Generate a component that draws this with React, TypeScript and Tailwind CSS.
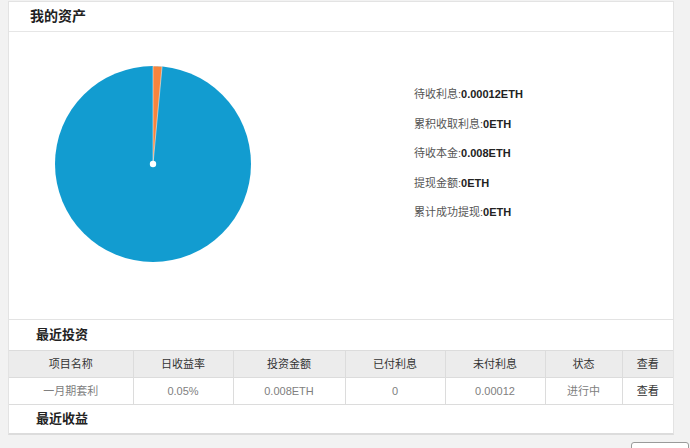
import React from 'react';

const FONT = { fontFamily: '"Liberation Sans", "Noto Sans CJK SC", sans-serif' };

const stats = [
    { label: '待收利息:', value: '0.00012ETH' },
    { label: '累积收取利息:', value: '0ETH' },
    { label: '待收本金:', value: '0.008ETH' },
    { label: '提现金额:', value: '0ETH' },
    { label: '累计成功提现:', value: '0ETH' },
];

const columns = [
    { title: '项目名称', width: 'w-[124px]' },
    { title: '日收益率', width: 'w-[100px]' },
    { title: '投资金额', width: 'w-[112px]' },
    { title: '已付利息', width: 'w-[100px]' },
    { title: '未付利息', width: 'w-[100px]' },
    { title: '状态', width: 'w-[77px]' },
    { title: '查看', width: 'w-[51px]' },
];

const rows = [['一月期套利', '0.05%', '0.008ETH', '0', '0.00012', '进行中', '查看']];

function AssetPie() {
    // 0.00012 of 0.00812 total, about 5.3 degrees from the top
    const r = 98;
    const angle = (0.00012 / 0.00812) * Math.PI * 2;
    const ex = 100 + r * Math.sin(angle);
    const ey = 100 - r * Math.cos(angle);
    return (
        <svg width="200" height="200" viewBox="0 0 200 200">
            <circle cx="100" cy="100" r={r} fill="#129cd0" />
            <path d={`M100 100 L100 ${100 - r} A${r} ${r} 0 0 1 ${ex} ${ey} Z`} fill="#f7843d" stroke="#ffffff" strokeWidth="0.5" />
            <circle cx="100" cy="100" r="3.2" fill="#ffffff" />
        </svg>
    );
}

export default function App() {
    return (
        <div className="w-[690px] h-[448px] bg-[#f2f2f2] overflow-hidden" style={FONT}>
            <div className="ml-[8px] w-[666px] bg-white border-x border-t border-b-2 border-[#e3e3e3] border-b-[#dcdcdc] mt-px">
                {/* Header */}
                <div className="h-[30px] flex items-center pl-[21px] border-b border-[#e6e6e6]">
                    <h2 className="text-[14px] font-bold text-[#222]">我的资产</h2>
                </div>

                {/* Chart */}
                <div className="h-[288px] flex border-b border-[#e3e3e3]">
                    <div className="pl-[44px] pt-[32px]">
                        <AssetPie />
                    </div>
                    <div className="ml-[161px] pt-[48px] text-[11px] leading-[29.5px]">
                        {stats.map(s => (
                            <div key={s.label}>
                                <span className="text-[#555]">{s.label}</span>
                                <span className="font-bold text-[#222]">{s.value}</span>
                            </div>
                        ))}
                    </div>
                </div>

                {/* Recent investments */}
                <div className="h-[30px] flex items-center pl-[27px]">
                    <h2 className="text-[13px] font-bold text-[#222]">最近投资</h2>
                </div>
                <table className="w-full border-collapse text-[11px] table-fixed">
                    <thead>
                        <tr className="bg-[#ececec] h-[27px] border-y border-[#dcdcdc]">
                            {columns.map((c, i) => (
                                <th key={c.title} className={`${c.width} font-normal text-[#333] ${i > 0 ? 'border-l border-[#dcdcdc]' : ''}`}>
                                    {c.title}
                                </th>
                            ))}
                        </tr>
                    </thead>
                    <tbody>
                        {rows.map((row, ri) => (
                            <tr key={ri} className="h-[27px] border-b border-[#dcdcdc]">
                                {row.map((cell, i) => (
                                    <td key={i} className={`text-center ${i === 6 ? 'text-[#333]' : 'text-[#808080]'} ${i > 0 ? 'border-l border-[#dcdcdc]' : ''}`}>
                                        {cell}
                                    </td>
                                ))}
                            </tr>
                        ))}
                    </tbody>
                </table>

                {/* Recent earnings */}
                <div className="h-[28px] flex items-center pl-[27px]">
                    <h2 className="text-[13px] font-bold text-[#222]">最近收益</h2>
                </div>
            </div>

            <div className="flex justify-end pr-px mt-[7px]">
                <div className="w-[58px] h-[20px] rounded-[3px] border border-[#9a9a9a] bg-white" />
            </div>
        </div>
    );
}
